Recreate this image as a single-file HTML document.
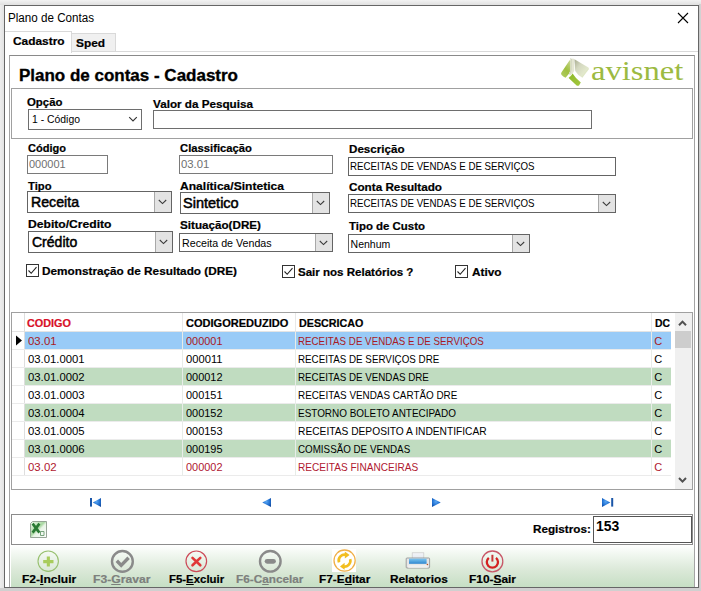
<!DOCTYPE html>
<html><head><meta charset="utf-8"><style>
html,body{margin:0;padding:0;width:701px;height:591px;overflow:hidden;background:#fff}
.a{position:absolute;display:block}
.t{position:absolute;white-space:nowrap;line-height:1;transform-origin:0 0}
u{text-decoration:underline;text-underline-offset:1px;text-decoration-thickness:1px}
</style></head><body>
<div class="a" style="left:0;top:0;width:701px;height:591px;background:linear-gradient(#eeeeee,#e6e6e6 97%,#cccccc)"></div>
<div class="a" style="left:0;top:0;width:4px;height:591px;background:linear-gradient(90deg,#ededed,#e2e2e2)"></div>
<div class="a" style="left:0;top:0;width:701px;height:5px;background:linear-gradient(#f2f2f2,#e0e0e0)"></div>
<div class="a" style="left:699px;top:4px;width:2px;height:587px;background:linear-gradient(90deg,#c6c6c6,#d6d6d6)"></div>
<div class="a" style="left:0;top:588px;width:701px;height:3px;background:#d0d0d0"></div>
<div class="a" style="left:4px;top:5px;width:695px;height:583px;background:#fff;"></div>
<svg class="a" style="left:677px;top:12px" width="12" height="12" viewBox="0 0 12 12"><path d="M1 1L11 11M11 1L1 11" stroke="#000" stroke-width="1.1"/></svg>
<div class="a" style="left:5px;top:51px;width:693px;height:1px;background:#d9d9d9;"></div>
<div class="a" style="left:71px;top:33px;width:45px;height:19px;box-sizing:border-box;border:1px solid #d9d9d9;background:#f0f0f0;"></div>
<div class="a" style="left:5px;top:31px;width:67px;height:22px;background:#fff;border-top:1px solid #d9d9d9;border-right:1px solid #d9d9d9;box-sizing:border-box;"></div>
<div class="a" style="left:9px;top:55px;width:686px;height:533px;box-sizing:border-box;border:1px solid #a4a4a4;border-top-color:#8a8a8a;"></div>
<div class="a" style="left:11px;top:88px;width:682px;height:51px;box-sizing:border-box;border:1px solid #a0a0a0;"></div>
<div class="a" style="left:28px;top:109px;width:114px;height:21px;box-sizing:border-box;border:1px solid #6e6e6e;background:#fff;"></div>
<svg class="a" style="left:128px;top:116px" width="10" height="7" viewBox="0 0 10 7"><path d="M1.2 1.2L5 5L8.8 1.2" stroke="#333" stroke-width="1.1" fill="none"/></svg>
<div class="a" style="left:153px;top:110px;width:439px;height:19px;box-sizing:border-box;border:1px solid #6e6e6e;background:#fff;"></div>
<div class="a" style="left:27px;top:155px;width:81px;height:19px;box-sizing:border-box;border:1px solid #7a7a7a;background:#fff;"></div>
<div class="a" style="left:179px;top:155px;width:154px;height:19px;box-sizing:border-box;border:1px solid #7a7a7a;background:#fff;"></div>
<div class="a" style="left:348px;top:157px;width:268px;height:19px;box-sizing:border-box;border:1px solid #646464;background:#fff;"></div>
<div class="a" style="left:27px;top:191px;width:145px;height:22px;box-sizing:border-box;border:1px solid #646464;background:#fff;"></div>
<div class="a" style="left:154px;top:192px;width:17px;height:20px;background:#e3e3e3;border-left:1px solid #a8a8a8;box-sizing:border-box;"></div>
<svg class="a" style="left:157.5px;top:199.0px" width="10" height="6" viewBox="0 0 10 6"><path d="M0.8 1L4.5 4.6L8.2 1" stroke="#3a3a3a" stroke-width="1.05" fill="none"/></svg>
<div class="a" style="left:180px;top:192px;width:150px;height:22px;box-sizing:border-box;border:1px solid #646464;background:#fff;"></div>
<div class="a" style="left:312px;top:193px;width:17px;height:20px;background:#e3e3e3;border-left:1px solid #a8a8a8;box-sizing:border-box;"></div>
<svg class="a" style="left:315.5px;top:200.0px" width="10" height="6" viewBox="0 0 10 6"><path d="M0.8 1L4.5 4.6L8.2 1" stroke="#3a3a3a" stroke-width="1.05" fill="none"/></svg>
<div class="a" style="left:348px;top:194px;width:268px;height:19px;box-sizing:border-box;border:1px solid #646464;background:#fff;"></div>
<div class="a" style="left:598px;top:195px;width:17px;height:17px;background:#e3e3e3;border-left:1px solid #a8a8a8;box-sizing:border-box;"></div>
<svg class="a" style="left:601.5px;top:200.5px" width="10" height="6" viewBox="0 0 10 6"><path d="M0.8 1L4.5 4.6L8.2 1" stroke="#3a3a3a" stroke-width="1.05" fill="none"/></svg>
<div class="a" style="left:28px;top:231px;width:145px;height:22px;box-sizing:border-box;border:1px solid #646464;background:#fff;"></div>
<div class="a" style="left:155px;top:232px;width:17px;height:20px;background:#e3e3e3;border-left:1px solid #a8a8a8;box-sizing:border-box;"></div>
<svg class="a" style="left:158.5px;top:239.0px" width="10" height="6" viewBox="0 0 10 6"><path d="M0.8 1L4.5 4.6L8.2 1" stroke="#3a3a3a" stroke-width="1.05" fill="none"/></svg>
<div class="a" style="left:179px;top:233px;width:154px;height:19px;box-sizing:border-box;border:1px solid #646464;background:#fff;"></div>
<div class="a" style="left:315px;top:234px;width:17px;height:17px;background:#e3e3e3;border-left:1px solid #a8a8a8;box-sizing:border-box;"></div>
<svg class="a" style="left:318.5px;top:239.5px" width="10" height="6" viewBox="0 0 10 6"><path d="M0.8 1L4.5 4.6L8.2 1" stroke="#3a3a3a" stroke-width="1.05" fill="none"/></svg>
<div class="a" style="left:348px;top:234px;width:182px;height:19px;box-sizing:border-box;border:1px solid #646464;background:#fff;"></div>
<div class="a" style="left:512px;top:235px;width:17px;height:17px;background:#e3e3e3;border-left:1px solid #a8a8a8;box-sizing:border-box;"></div>
<svg class="a" style="left:515.5px;top:240.5px" width="10" height="6" viewBox="0 0 10 6"><path d="M0.8 1L4.5 4.6L8.2 1" stroke="#3a3a3a" stroke-width="1.05" fill="none"/></svg>
<div class="a" style="left:26px;top:264px;width:13px;height:13px;box-sizing:border-box;border:1px solid #333;background:#fff;"></div>
<svg class="a" style="left:26px;top:264px" width="13" height="13" viewBox="0 0 13 13"><path d="M2.5 6.5L5.2 9.3L10.5 3.2" stroke="#222" stroke-width="1.1" fill="none"/></svg>
<div class="a" style="left:282px;top:265px;width:13px;height:13px;box-sizing:border-box;border:1px solid #333;background:#fff;"></div>
<svg class="a" style="left:282px;top:265px" width="13" height="13" viewBox="0 0 13 13"><path d="M2.5 6.5L5.2 9.3L10.5 3.2" stroke="#222" stroke-width="1.1" fill="none"/></svg>
<div class="a" style="left:455px;top:265px;width:13px;height:13px;box-sizing:border-box;border:1px solid #333;background:#fff;"></div>
<svg class="a" style="left:455px;top:265px" width="13" height="13" viewBox="0 0 13 13"><path d="M2.5 6.5L5.2 9.3L10.5 3.2" stroke="#222" stroke-width="1.1" fill="none"/></svg>
<svg class="a" style="left:558px;top:56px" width="34" height="32" viewBox="0 0 34 32"><defs><linearGradient id="lg1" x1="0.8" y1="0" x2="0.2" y2="1"><stop offset="0" stop-color="#c4d488"/><stop offset="0.5" stop-color="#a0c040"/><stop offset="1" stop-color="#b0cc60"/></linearGradient><linearGradient id="lg2" x1="0" y1="0" x2="1" y2="1"><stop offset="0" stop-color="#a8ac90"/><stop offset="0.35" stop-color="#d4d8c0"/><stop offset="0.7" stop-color="#e2e8cc"/><stop offset="1" stop-color="#c8d898"/></linearGradient><linearGradient id="lg3" x1="0" y1="0" x2="1" y2="1"><stop offset="0" stop-color="#8cb828"/><stop offset="1" stop-color="#a4c840"/></linearGradient></defs><path d="M11.6 4.2L12.6 4.6L12.4 14.6Q11.2 18.6 7.6 21.8Q5.6 21.2 3.6 19Q2.6 17.8 3.4 16.6Z" fill="url(#lg1)"/><path d="M12.4 2.6L16 2.8L16.4 14.2Q15.6 17.2 12.2 19.6L11 18.2Q12.8 16 12.9 13.6Z" fill="#e4e6d2"/><path d="M12.4 2.6L13.2 3L13 14Q12.6 16.4 11.4 18" stroke="#c8cbb4" stroke-width="0.8" fill="none"/><path d="M16.4 3.2L30.4 11.6Q31.2 12.4 30.6 13.4L24.4 21.8Q19.6 19.2 17.2 15Z" fill="url(#lg2)"/><path d="M10.4 21.8Q13.2 20 14.6 17.6Q18 23 22.8 26.6L21 29.4Q19.8 30.2 18.6 29.4Z" fill="url(#lg3)"/><path d="M8.6 22.8Q12 20.8 13.6 18.4" stroke="#f4f8e0" stroke-width="0.9" fill="none"/></svg>
<div class="a" style="left:11px;top:312px;width:682px;height:178px;box-sizing:border-box;border:1px solid #a0a0a0;background:#fff;"></div>
<div class="a" style="left:675px;top:313px;width:17px;height:176px;background:#f0f0f0;"></div>
<div class="a" style="left:675px;top:331px;width:16px;height:17px;background:#cdcdcd;"></div>
<svg class="a" style="left:678px;top:319px" width="9" height="8" viewBox="0 0 9 8"><path d="M1 6.2L4.5 2.6L8 6.2" stroke="#505050" stroke-width="2" fill="none"/></svg>
<svg class="a" style="left:678px;top:476px" width="9" height="8" viewBox="0 0 9 8"><path d="M1 2L4.5 5.6L8 2" stroke="#505050" stroke-width="2" fill="none"/></svg>
<div class="a" style="left:12px;top:331px;width:659px;height:1px;background:#e4e4e4;"></div>
<div class="a" style="left:182px;top:313px;width:1px;height:18px;background:#e8e8e8;"></div>
<div class="a" style="left:295px;top:313px;width:1px;height:18px;background:#e8e8e8;"></div>
<div class="a" style="left:651px;top:313px;width:1px;height:18px;background:#e8e8e8;"></div>
<div class="a" style="left:24px;top:313px;width:1px;height:163px;background:#dedede;"></div>
<div class="a" style="left:25px;top:332px;width:646px;height:17px;background:#99cbf7;"></div>
<div class="a" style="left:12px;top:349px;width:659px;height:1px;background:#ebebeb;"></div>
<div class="a" style="left:182px;top:332px;width:1px;height:18px;background:#e8ece8;"></div>
<div class="a" style="left:295px;top:332px;width:1px;height:18px;background:#e8ece8;"></div>
<div class="a" style="left:651px;top:332px;width:1px;height:18px;background:#e8ece8;"></div>
<div class="a" style="left:25px;top:350px;width:646px;height:17px;background:#fff;"></div>
<div class="a" style="left:12px;top:367px;width:659px;height:1px;background:#ebebeb;"></div>
<div class="a" style="left:182px;top:350px;width:1px;height:18px;background:#e8ece8;"></div>
<div class="a" style="left:295px;top:350px;width:1px;height:18px;background:#e8ece8;"></div>
<div class="a" style="left:651px;top:350px;width:1px;height:18px;background:#e8ece8;"></div>
<div class="a" style="left:25px;top:368px;width:646px;height:17px;background:#c0dcc0;"></div>
<div class="a" style="left:12px;top:385px;width:659px;height:1px;background:#ebebeb;"></div>
<div class="a" style="left:182px;top:368px;width:1px;height:18px;background:#e8ece8;"></div>
<div class="a" style="left:295px;top:368px;width:1px;height:18px;background:#e8ece8;"></div>
<div class="a" style="left:651px;top:368px;width:1px;height:18px;background:#e8ece8;"></div>
<div class="a" style="left:25px;top:386px;width:646px;height:17px;background:#fff;"></div>
<div class="a" style="left:12px;top:403px;width:659px;height:1px;background:#ebebeb;"></div>
<div class="a" style="left:182px;top:386px;width:1px;height:18px;background:#e8ece8;"></div>
<div class="a" style="left:295px;top:386px;width:1px;height:18px;background:#e8ece8;"></div>
<div class="a" style="left:651px;top:386px;width:1px;height:18px;background:#e8ece8;"></div>
<div class="a" style="left:25px;top:404px;width:646px;height:17px;background:#c0dcc0;"></div>
<div class="a" style="left:12px;top:421px;width:659px;height:1px;background:#ebebeb;"></div>
<div class="a" style="left:182px;top:404px;width:1px;height:18px;background:#e8ece8;"></div>
<div class="a" style="left:295px;top:404px;width:1px;height:18px;background:#e8ece8;"></div>
<div class="a" style="left:651px;top:404px;width:1px;height:18px;background:#e8ece8;"></div>
<div class="a" style="left:25px;top:422px;width:646px;height:17px;background:#fff;"></div>
<div class="a" style="left:12px;top:439px;width:659px;height:1px;background:#ebebeb;"></div>
<div class="a" style="left:182px;top:422px;width:1px;height:18px;background:#e8ece8;"></div>
<div class="a" style="left:295px;top:422px;width:1px;height:18px;background:#e8ece8;"></div>
<div class="a" style="left:651px;top:422px;width:1px;height:18px;background:#e8ece8;"></div>
<div class="a" style="left:25px;top:440px;width:646px;height:17px;background:#c0dcc0;"></div>
<div class="a" style="left:12px;top:457px;width:659px;height:1px;background:#ebebeb;"></div>
<div class="a" style="left:182px;top:440px;width:1px;height:18px;background:#e8ece8;"></div>
<div class="a" style="left:295px;top:440px;width:1px;height:18px;background:#e8ece8;"></div>
<div class="a" style="left:651px;top:440px;width:1px;height:18px;background:#e8ece8;"></div>
<div class="a" style="left:25px;top:458px;width:646px;height:17px;background:#fff;"></div>
<div class="a" style="left:12px;top:475px;width:659px;height:1px;background:#ebebeb;"></div>
<div class="a" style="left:182px;top:458px;width:1px;height:18px;background:#e8ece8;"></div>
<div class="a" style="left:295px;top:458px;width:1px;height:18px;background:#e8ece8;"></div>
<div class="a" style="left:651px;top:458px;width:1px;height:18px;background:#e8ece8;"></div>
<svg class="a" style="left:15px;top:335px" width="8" height="11" viewBox="0 0 8 11"><path d="M1 0.5L7 5.5L1 10.5Z" fill="#000"/></svg>
<svg class="a" style="left:90px;top:498px" width="12" height="9" viewBox="0 0 12 9"><defs><radialGradient id="ngfirst" cx="0.45" cy="0.4" r="0.7"><stop offset="0" stop-color="#5aa6f2"/><stop offset="0.6" stop-color="#1f6fd0"/><stop offset="1" stop-color="#14489a"/></radialGradient></defs><rect x="0" y="0" width="2" height="8.6" fill="#1a56a8"/><path d="M11 0L2.8 4.5L11 9Z" fill="url(#ngfirst)"/></svg>
<svg class="a" style="left:262px;top:498px" width="12" height="9" viewBox="0 0 12 9"><defs><radialGradient id="ngprev" cx="0.45" cy="0.4" r="0.7"><stop offset="0" stop-color="#5aa6f2"/><stop offset="0.6" stop-color="#1f6fd0"/><stop offset="1" stop-color="#14489a"/></radialGradient></defs><path d="M9 0L0.3 4.5L9 9Z" fill="url(#ngprev)"/></svg>
<svg class="a" style="left:432px;top:498px" width="12" height="9" viewBox="0 0 12 9"><defs><radialGradient id="ngnext" cx="0.45" cy="0.4" r="0.7"><stop offset="0" stop-color="#5aa6f2"/><stop offset="0.6" stop-color="#1f6fd0"/><stop offset="1" stop-color="#14489a"/></radialGradient></defs><path d="M0 0L8.7 4.5L0 9Z" fill="url(#ngnext)"/></svg>
<svg class="a" style="left:602px;top:498px" width="12" height="9" viewBox="0 0 12 9"><defs><radialGradient id="nglast" cx="0.45" cy="0.4" r="0.7"><stop offset="0" stop-color="#5aa6f2"/><stop offset="0.6" stop-color="#1f6fd0"/><stop offset="1" stop-color="#14489a"/></radialGradient></defs><path d="M0 0L8.3 4.5L0 9Z" fill="url(#nglast)"/><rect x="9.2" y="0" width="2" height="8.6" fill="#1a56a8"/></svg>
<div class="a" style="left:11px;top:514px;width:682px;height:31px;box-sizing:border-box;border:1px solid #8c8c8c;"></div>
<svg class="a" style="left:30px;top:521px" width="17" height="17" viewBox="0 0 17 17"><defs><linearGradient id="xg" x1="0" y1="0" x2="1" y2="1"><stop offset="0" stop-color="#f4fbf2"/><stop offset="0.45" stop-color="#a8d8a0"/><stop offset="0.55" stop-color="#e8f4e6"/><stop offset="1" stop-color="#ffffff"/></linearGradient></defs><path d="M2.5 0.5H16.5V16.5H0.5V2.5Z" fill="url(#xg)" stroke="#8c9c8c" stroke-width="0.9"/><path d="M2.6 2.6L9.4 11.6M9.4 2.6L2.6 11.6" stroke="#2a7a34" stroke-width="2.6"/><path d="M10.5 10.5h3.5v4h-3.5z" fill="none" stroke="#6a9a70" stroke-width="0.9"/></svg>
<div class="a" style="left:593px;top:516px;width:99px;height:27px;box-sizing:border-box;border:1px solid #555555;background:#fff;"></div>
<div class="a" style="left:11px;top:545px;width:683px;height:42px;background:linear-gradient(#ffffff 0%,#eff6ee 25%,#dce9d9 58%,#c6dfc4 100%)"></div>
<svg class="a" style="left:35.05px;top:547.65px" width="26.40" height="26.40" viewBox="-13.20 -13.20 26.40 26.40"><circle cx="0" cy="0" r="10.2" fill="none" stroke="#98c070" stroke-width="1.1"/><path d="M0.15 -4.6V5.4M-5 0.45H5.3" stroke="#a8cc5c" stroke-width="3.1"/></svg>
<svg class="a" style="left:109.20px;top:547.90px" width="26.80" height="26.80" viewBox="-13.40 -13.40 26.80 26.80"><circle cx="0" cy="0" r="10.4" fill="none" stroke="#8a8a8a" stroke-width="2.4"/><path d="M-5.6 -0.6L-1.2 4L6.2 -3.6" stroke="#8a8a8a" stroke-width="3.4" fill="none"/></svg>
<svg class="a" style="left:183.10px;top:547.70px" width="26.60" height="26.60" viewBox="-13.30 -13.30 26.60 26.60"><circle cx="0" cy="0" r="10.3" fill="none" stroke="#cc4a58" stroke-width="1.2"/><path d="M-3.8 -3.4L4 4M4 -3.4L-3.8 4" stroke="#e03838" stroke-width="2.6" stroke-linecap="round"/></svg>
<svg class="a" style="left:257.20px;top:548.10px" width="26.60" height="26.60" viewBox="-13.30 -13.30 26.60 26.60"><circle cx="0" cy="0" r="10.3" fill="none" stroke="#8a8a8a" stroke-width="2.4"/><rect x="-5.6" y="-2.4" width="11.2" height="4.8" rx="2.4" fill="#8a8a8a"/></svg>
<div class="a" style="left:332px;top:549px;width:24px;height:23px;background:#fff"></div>
<svg class="a" style="left:330.90px;top:547.00px" width="27.20" height="27.20" viewBox="-13.60 -13.60 27.20 27.20"><circle cx="0" cy="0" r="10.6" fill="none" stroke="#f0b048" stroke-width="1.3"/><path d="M-5.6 1.8A5.8 5.8 0 0 1 2.2 -5.4" stroke="#f2be20" stroke-width="2.6" fill="none"/><path d="M5.6 -1.4A5.8 5.8 0 0 1 -2 5.6" stroke="#f2be20" stroke-width="2.6" fill="none"/><path d="M0.2 -9L5 -5.6L0.2 -2Z" fill="#f2be20"/><path d="M0 2.2L-4.6 5.8L0 9.2Z" fill="#f2be20"/></svg>
<svg class="a" style="left:402px;top:547px" width="32" height="28" viewBox="0 0 32 28"><defs><linearGradient id="pg" x1="0" y1="0" x2="0" y2="1"><stop offset="0" stop-color="#f4f6f8"/><stop offset="1" stop-color="#dfe6ee"/></linearGradient><linearGradient id="pb" x1="0" y1="0" x2="0" y2="1"><stop offset="0" stop-color="#7cc6f0"/><stop offset="1" stop-color="#2f86d0"/></linearGradient></defs><rect x="10.2" y="5.8" width="11.6" height="6.5" fill="url(#pg)" stroke="#c8c8c8" stroke-width="0.7"/><rect x="4.2" y="11" width="23.4" height="10" rx="0.8" fill="#e6e6e6" stroke="#8c8c8c" stroke-width="0.8"/><rect x="7" y="11.6" width="17.6" height="5.2" fill="url(#pb)"/><rect x="6.2" y="18.2" width="19.5" height="2.6" fill="#f0f0f0"/><circle cx="25.4" cy="17.5" r="0.8" fill="#c05020"/></svg>
<svg class="a" style="left:478.60px;top:548.00px" width="26.80" height="26.80" viewBox="-13.40 -13.40 26.80 26.80"><circle cx="0" cy="0" r="10.4" fill="none" stroke="#c85868" stroke-width="1.3"/><path d="M-3.6 -3.6A5.6 5.6 0 1 0 3.6 -3.6" stroke="#d42222" stroke-width="2.3" fill="none"/><path d="M0 -6.6V0.2" stroke="#c83838" stroke-width="2"/></svg>
<div class="t" id="t0" style="left:7.80px;top:12.22px;font-size:12.5px;color:#000;font-family:'Liberation Sans',sans-serif;transform:scaleX(0.9304);">Plano de Contas</div>
<div class="t" id="t1" style="left:12.80px;top:35.69px;font-size:11px;color:#000;font-family:'Liberation Sans',sans-serif;font-weight:bold;-webkit-text-stroke:0.2px #000;transform:scaleX(1.0820);">Cadastro</div>
<div class="t" id="t2" style="left:76.00px;top:37.69px;font-size:11px;color:#000;font-family:'Liberation Sans',sans-serif;font-weight:bold;-webkit-text-stroke:0.2px #000;transform:scaleX(1.0778);">Sped</div>
<div class="t" id="t3" style="left:19.40px;top:67.07px;font-size:17.4px;color:#000;font-family:'Liberation Sans',sans-serif;font-weight:bold;-webkit-text-stroke:0.35px #000;transform:scaleX(0.9768);">Plano de contas - Cadastro</div>
<div class="t" id="t4" style="left:27.30px;top:96.81px;font-size:10.5px;color:#000;font-family:'Liberation Sans',sans-serif;font-weight:bold;-webkit-text-stroke:0.2px #000;transform:scaleX(1.0860);">Opção</div>
<div class="t" id="t5" style="left:153.00px;top:99.11px;font-size:10.5px;color:#000;font-family:'Liberation Sans',sans-serif;font-weight:bold;-webkit-text-stroke:0.2px #000;transform:scaleX(1.1125);">Valor da Pesquisa</div>
<div class="t" id="t6" style="left:32.00px;top:113.91px;font-size:10.5px;color:#000;font-family:'Liberation Sans',sans-serif;transform:scaleX(0.9906);">1 - Código</div>
<div class="t" id="t7" style="left:27.50px;top:142.71px;font-size:10.5px;color:#000;font-family:'Liberation Sans',sans-serif;font-weight:bold;-webkit-text-stroke:0.2px #000;transform:scaleX(1.0510);">Código</div>
<div class="t" id="t8" style="left:28.80px;top:159.11px;font-size:10.5px;color:#707070;font-family:'Liberation Sans',sans-serif;transform:scaleX(1.0472);">000001</div>
<div class="t" id="t9" style="left:179.80px;top:142.81px;font-size:10.5px;color:#000;font-family:'Liberation Sans',sans-serif;font-weight:bold;-webkit-text-stroke:0.2px #000;transform:scaleX(1.0726);">Classificação</div>
<div class="t" id="t10" style="left:180.90px;top:159.11px;font-size:10.5px;color:#707070;font-family:'Liberation Sans',sans-serif;transform:scaleX(1.0806);">03.01</div>
<div class="t" id="t11" style="left:348.60px;top:143.91px;font-size:10.5px;color:#000;font-family:'Liberation Sans',sans-serif;font-weight:bold;-webkit-text-stroke:0.2px #000;transform:scaleX(1.1055);">Descrição</div>
<div class="t" id="t12" style="left:350.30px;top:161.11px;font-size:10.5px;color:#000;font-family:'Liberation Sans',sans-serif;transform:scaleX(0.9237);">RECEITAS DE VENDAS E DE SERVIÇOS</div>
<div class="t" id="t13" style="left:27.50px;top:180.91px;font-size:10.5px;color:#000;font-family:'Liberation Sans',sans-serif;font-weight:bold;-webkit-text-stroke:0.2px #000;transform:scaleX(1.0689);">Tipo</div>
<div class="t" id="t14" style="left:31.00px;top:194.85px;font-size:14px;color:#000;font-family:'Liberation Sans',sans-serif;-webkit-text-stroke:0.5px #000;transform:scaleX(1.0112);">Receita</div>
<div class="t" id="t15" style="left:180.00px;top:181.11px;font-size:10.5px;color:#000;font-family:'Liberation Sans',sans-serif;font-weight:bold;-webkit-text-stroke:0.2px #000;transform:scaleX(1.1498);">Analítica/Sintetica</div>
<div class="t" id="t16" style="left:183.30px;top:196.35px;font-size:14px;color:#000;font-family:'Liberation Sans',sans-serif;-webkit-text-stroke:0.5px #000;transform:scaleX(1.0372);">Sintetico</div>
<div class="t" id="t17" style="left:348.60px;top:181.81px;font-size:10.5px;color:#000;font-family:'Liberation Sans',sans-serif;font-weight:bold;-webkit-text-stroke:0.2px #000;transform:scaleX(1.1148);">Conta Resultado</div>
<div class="t" id="t18" style="left:350.30px;top:197.91px;font-size:10.5px;color:#000;font-family:'Liberation Sans',sans-serif;transform:scaleX(0.9237);">RECEITAS DE VENDAS E DE SERVIÇOS</div>
<div class="t" id="t19" style="left:27.50px;top:219.31px;font-size:10.5px;color:#000;font-family:'Liberation Sans',sans-serif;font-weight:bold;-webkit-text-stroke:0.2px #000;transform:scaleX(1.1542);">Debito/Credito</div>
<div class="t" id="t20" style="left:31.80px;top:234.55px;font-size:14px;color:#000;font-family:'Liberation Sans',sans-serif;-webkit-text-stroke:0.5px #000;transform:scaleX(1.0013);">Crédito</div>
<div class="t" id="t21" style="left:179.80px;top:219.61px;font-size:10.5px;color:#000;font-family:'Liberation Sans',sans-serif;font-weight:bold;-webkit-text-stroke:0.2px #000;transform:scaleX(1.1105);">Situação(DRE)</div>
<div class="t" id="t22" style="left:181.60px;top:237.61px;font-size:10.5px;color:#000;font-family:'Liberation Sans',sans-serif;transform:scaleX(1.0164);">Receita de Vendas</div>
<div class="t" id="t23" style="left:348.60px;top:220.51px;font-size:10.5px;color:#000;font-family:'Liberation Sans',sans-serif;font-weight:bold;-webkit-text-stroke:0.2px #000;transform:scaleX(1.0886);">Tipo de Custo</div>
<div class="t" id="t24" style="left:350.60px;top:239.11px;font-size:10.5px;color:#000;font-family:'Liberation Sans',sans-serif;">Nenhum</div>
<div class="t" id="t25" style="left:42.20px;top:266.11px;font-size:10.5px;color:#000;font-family:'Liberation Sans',sans-serif;font-weight:bold;-webkit-text-stroke:0.2px #000;transform:scaleX(1.1215);">Demonstração de Resultado (DRE)</div>
<div class="t" id="t26" style="left:298.40px;top:267.11px;font-size:10.5px;color:#000;font-family:'Liberation Sans',sans-serif;font-weight:bold;-webkit-text-stroke:0.2px #000;transform:scaleX(1.0987);">Sair nos Relatórios ?</div>
<div class="t" id="t27" style="left:471.80px;top:267.11px;font-size:10.5px;color:#000;font-family:'Liberation Sans',sans-serif;font-weight:bold;-webkit-text-stroke:0.2px #000;transform:scaleX(1.1238);">Ativo</div>
<div class="t" id="t28" style="left:591.20px;top:58.08px;font-size:26.6px;color:#9cba42;font-family:'Liberation Serif',sans-serif;transform:scaleX(1.2266);">avisnet</div>
<div class="t" id="t29" style="left:27.10px;top:317.71px;font-size:10.5px;color:#d81028;font-family:'Liberation Sans',sans-serif;font-weight:bold;-webkit-text-stroke:0.2px #d81028;transform:scaleX(1.0330);">CODIGO</div>
<div class="t" id="t30" style="left:185.50px;top:317.81px;font-size:10.5px;color:#000;font-family:'Liberation Sans',sans-serif;font-weight:bold;-webkit-text-stroke:0.2px #000;transform:scaleX(1.0511);">CODIGOREDUZIDO</div>
<div class="t" id="t31" style="left:298.60px;top:317.81px;font-size:10.5px;color:#000;font-family:'Liberation Sans',sans-serif;font-weight:bold;-webkit-text-stroke:0.2px #000;transform:scaleX(1.0220);">DESCRICAO</div>
<div class="t" id="t32" style="left:654.70px;top:317.81px;font-size:10.5px;color:#000;font-family:'Liberation Sans',sans-serif;font-weight:bold;-webkit-text-stroke:0.2px #000;transform:scaleX(0.9887);">DC</div>
<div class="t" id="t33" style="left:27.80px;top:336.19px;font-size:11px;color:#a81a24;font-family:'Liberation Sans',sans-serif;transform:scaleX(1.0388);">03.01</div>
<div class="t" id="t34" style="left:185.60px;top:336.19px;font-size:11px;color:#a81a24;font-family:'Liberation Sans',sans-serif;transform:scaleX(0.9940);">000001</div>
<div class="t" id="t35" style="left:298.40px;top:336.19px;font-size:11px;color:#a81a24;font-family:'Liberation Sans',sans-serif;transform:scaleX(0.8879);">RECEITAS DE VENDAS E DE SERVIÇOS</div>
<div class="t" id="t36" style="left:654.20px;top:336.19px;font-size:11px;color:#a81a24;font-family:'Liberation Sans',sans-serif;">C</div>
<div class="t" id="t37" style="left:27.80px;top:354.19px;font-size:11px;color:#000;font-family:'Liberation Sans',sans-serif;transform:scaleX(1.0279);">03.01.0001</div>
<div class="t" id="t38" style="left:185.60px;top:354.19px;font-size:11px;color:#000;font-family:'Liberation Sans',sans-serif;transform:scaleX(1.0170);">000011</div>
<div class="t" id="t39" style="left:298.40px;top:354.19px;font-size:11px;color:#000;font-family:'Liberation Sans',sans-serif;transform:scaleX(0.8913);">RECEITAS DE SERVIÇOS DRE</div>
<div class="t" id="t40" style="left:654.20px;top:354.19px;font-size:11px;color:#000;font-family:'Liberation Sans',sans-serif;">C</div>
<div class="t" id="t41" style="left:27.80px;top:372.19px;font-size:11px;color:#000;font-family:'Liberation Sans',sans-serif;transform:scaleX(1.0279);">03.01.0002</div>
<div class="t" id="t42" style="left:185.60px;top:372.19px;font-size:11px;color:#000;font-family:'Liberation Sans',sans-serif;transform:scaleX(0.9940);">000012</div>
<div class="t" id="t43" style="left:298.40px;top:372.19px;font-size:11px;color:#000;font-family:'Liberation Sans',sans-serif;transform:scaleX(0.8891);">RECEITAS DE VENDAS DRE</div>
<div class="t" id="t44" style="left:654.20px;top:372.19px;font-size:11px;color:#000;font-family:'Liberation Sans',sans-serif;">C</div>
<div class="t" id="t45" style="left:27.80px;top:390.19px;font-size:11px;color:#000;font-family:'Liberation Sans',sans-serif;transform:scaleX(1.0279);">03.01.0003</div>
<div class="t" id="t46" style="left:185.60px;top:390.19px;font-size:11px;color:#000;font-family:'Liberation Sans',sans-serif;transform:scaleX(0.9940);">000151</div>
<div class="t" id="t47" style="left:298.40px;top:390.19px;font-size:11px;color:#000;font-family:'Liberation Sans',sans-serif;transform:scaleX(0.8976);">RECEITAS VENDAS CARTÃO DRE</div>
<div class="t" id="t48" style="left:654.20px;top:390.19px;font-size:11px;color:#000;font-family:'Liberation Sans',sans-serif;">C</div>
<div class="t" id="t49" style="left:27.80px;top:408.19px;font-size:11px;color:#000;font-family:'Liberation Sans',sans-serif;transform:scaleX(1.0279);">03.01.0004</div>
<div class="t" id="t50" style="left:185.60px;top:408.19px;font-size:11px;color:#000;font-family:'Liberation Sans',sans-serif;transform:scaleX(0.9940);">000152</div>
<div class="t" id="t51" style="left:298.40px;top:408.19px;font-size:11px;color:#000;font-family:'Liberation Sans',sans-serif;transform:scaleX(0.9032);">ESTORNO BOLETO ANTECIPADO</div>
<div class="t" id="t52" style="left:654.20px;top:408.19px;font-size:11px;color:#000;font-family:'Liberation Sans',sans-serif;">C</div>
<div class="t" id="t53" style="left:27.80px;top:426.19px;font-size:11px;color:#000;font-family:'Liberation Sans',sans-serif;transform:scaleX(1.0279);">03.01.0005</div>
<div class="t" id="t54" style="left:185.60px;top:426.19px;font-size:11px;color:#000;font-family:'Liberation Sans',sans-serif;transform:scaleX(0.9940);">000153</div>
<div class="t" id="t55" style="left:298.40px;top:426.19px;font-size:11px;color:#000;font-family:'Liberation Sans',sans-serif;transform:scaleX(0.9289);">RECEITAS DEPOSITO A INDENTIFICAR</div>
<div class="t" id="t56" style="left:654.20px;top:426.19px;font-size:11px;color:#000;font-family:'Liberation Sans',sans-serif;">C</div>
<div class="t" id="t57" style="left:27.80px;top:444.19px;font-size:11px;color:#000;font-family:'Liberation Sans',sans-serif;transform:scaleX(1.0279);">03.01.0006</div>
<div class="t" id="t58" style="left:185.60px;top:444.19px;font-size:11px;color:#000;font-family:'Liberation Sans',sans-serif;transform:scaleX(0.9940);">000195</div>
<div class="t" id="t59" style="left:298.40px;top:444.19px;font-size:11px;color:#000;font-family:'Liberation Sans',sans-serif;transform:scaleX(0.8910);">COMISSÃO DE VENDAS</div>
<div class="t" id="t60" style="left:654.20px;top:444.19px;font-size:11px;color:#000;font-family:'Liberation Sans',sans-serif;">C</div>
<div class="t" id="t61" style="left:27.80px;top:462.19px;font-size:11px;color:#b01830;font-family:'Liberation Sans',sans-serif;transform:scaleX(1.0388);">03.02</div>
<div class="t" id="t62" style="left:185.60px;top:462.19px;font-size:11px;color:#b01830;font-family:'Liberation Sans',sans-serif;transform:scaleX(0.9940);">000002</div>
<div class="t" id="t63" style="left:298.40px;top:462.19px;font-size:11px;color:#b01830;font-family:'Liberation Sans',sans-serif;transform:scaleX(0.9160);">RECEITAS FINANCEIRAS</div>
<div class="t" id="t64" style="left:654.20px;top:462.19px;font-size:11px;color:#b01830;font-family:'Liberation Sans',sans-serif;">C</div>
<div class="t" id="t65" style="left:533.40px;top:524.09px;font-size:11px;color:#000;font-family:'Liberation Sans',sans-serif;font-weight:bold;-webkit-text-stroke:0.2px #000;transform:scaleX(1.0624);">Registros:</div>
<div class="t" id="t66" style="left:595.80px;top:519.15px;font-size:14px;color:#000;font-family:'Liberation Sans',sans-serif;font-weight:bold;transform:scaleX(0.9975);">153</div>
<div class="t" id="t67" style="left:21.80px;top:574.49px;font-size:11px;color:#000;font-family:'Liberation Sans',sans-serif;font-weight:bold;-webkit-text-stroke:0.2px #000;transform:scaleX(1.0946);">F2-<u>I</u>ncluir</div>
<div class="t" id="t68" style="left:93.30px;top:574.49px;font-size:11px;color:#7d807d;font-family:'Liberation Sans',sans-serif;font-weight:bold;-webkit-text-stroke:0.2px #7d807d;transform:scaleX(1.1042);">F3-<u>G</u>ravar</div>
<div class="t" id="t69" style="left:168.60px;top:574.29px;font-size:11px;color:#000;font-family:'Liberation Sans',sans-serif;font-weight:bold;-webkit-text-stroke:0.2px #000;transform:scaleX(1.0375);">F5-<u>E</u>xcluir</div>
<div class="t" id="t70" style="left:236.40px;top:574.29px;font-size:11px;color:#7d807d;font-family:'Liberation Sans',sans-serif;font-weight:bold;-webkit-text-stroke:0.2px #7d807d;transform:scaleX(1.0698);">F6-C<u>a</u>ncelar</div>
<div class="t" id="t71" style="left:318.80px;top:574.29px;font-size:11px;color:#000;font-family:'Liberation Sans',sans-serif;font-weight:bold;-webkit-text-stroke:0.2px #000;transform:scaleX(1.0754);">F7-E<u>d</u>itar</div>
<div class="t" id="t72" style="left:389.60px;top:574.29px;font-size:11px;color:#000;font-family:'Liberation Sans',sans-serif;font-weight:bold;-webkit-text-stroke:0.2px #000;transform:scaleX(1.0726);">Relatorios</div>
<div class="t" id="t73" style="left:468.80px;top:574.29px;font-size:11px;color:#000;font-family:'Liberation Sans',sans-serif;font-weight:bold;-webkit-text-stroke:0.2px #000;transform:scaleX(1.0820);">F10-<u>S</u>air</div>
<div class="a" style="left:4px;top:5px;width:695px;height:583px;box-sizing:border-box;border:1px solid #666666"></div>
</body></html>
